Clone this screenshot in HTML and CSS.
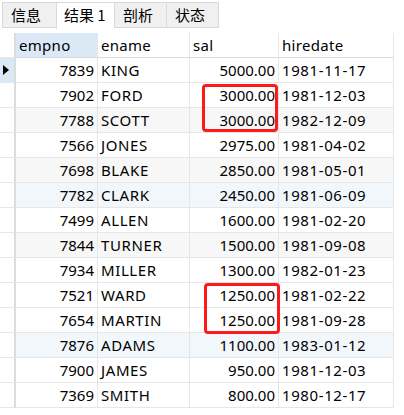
FILE: index.html
```html
<!DOCTYPE html>
<html>
<head>
<meta charset="utf-8">
<link rel="stylesheet" href="styles.css">
</head>
<body>
<div class="tabs">
  <div class="tab">信息</div>
  <div class="tab active">结果 1</div>
  <div class="tab">剖析</div>
  <div class="tab">状态</div>
</div>
<div class="grid">
  <div class="row head">
    <div class="ind"></div>
    <div class="cell sel">empno</div>
    <div class="cell">ename</div>
    <div class="cell">sal</div>
    <div class="cell">hiredate</div>
  </div>
  <div class="row cur"><div class="ind"><span class="tri"></span></div><div class="cell num">7839</div><div class="cell">KING</div><div class="cell num">5000.00</div><div class="cell">1981-11-17</div></div>
  <div class="row"><div class="ind"></div><div class="cell num">7902</div><div class="cell">FORD</div><div class="cell num">3000.00</div><div class="cell">1981-12-03</div></div>
  <div class="row alt"><div class="ind"></div><div class="cell num">7788</div><div class="cell">SCOTT</div><div class="cell num">3000.00</div><div class="cell">1982-12-09</div></div>
  <div class="row"><div class="ind"></div><div class="cell num">7566</div><div class="cell">JONES</div><div class="cell num">2975.00</div><div class="cell">1981-04-02</div></div>
  <div class="row alt"><div class="ind"></div><div class="cell num">7698</div><div class="cell">BLAKE</div><div class="cell num">2850.00</div><div class="cell">1981-05-01</div></div>
  <div class="row blue"><div class="ind"></div><div class="cell num">7782</div><div class="cell">CLARK</div><div class="cell num">2450.00</div><div class="cell">1981-06-09</div></div>
  <div class="row"><div class="ind"></div><div class="cell num">7499</div><div class="cell">ALLEN</div><div class="cell num">1600.00</div><div class="cell">1981-02-20</div></div>
  <div class="row alt"><div class="ind"></div><div class="cell num">7844</div><div class="cell">TURNER</div><div class="cell num">1500.00</div><div class="cell">1981-09-08</div></div>
  <div class="row"><div class="ind"></div><div class="cell num">7934</div><div class="cell">MILLER</div><div class="cell num">1300.00</div><div class="cell">1982-01-23</div></div>
  <div class="row"><div class="ind"></div><div class="cell num">7521</div><div class="cell">WARD</div><div class="cell num">1250.00</div><div class="cell">1981-02-22</div></div>
  <div class="row"><div class="ind"></div><div class="cell num">7654</div><div class="cell">MARTIN</div><div class="cell num">1250.00</div><div class="cell">1981-09-28</div></div>
  <div class="row blue"><div class="ind"></div><div class="cell num">7876</div><div class="cell">ADAMS</div><div class="cell num">1100.00</div><div class="cell">1983-01-12</div></div>
  <div class="row"><div class="ind"></div><div class="cell num">7900</div><div class="cell">JAMES</div><div class="cell num">950.00</div><div class="cell">1981-12-03</div></div>
  <div class="row"><div class="ind"></div><div class="cell num">7369</div><div class="cell">SMITH</div><div class="cell num">800.00</div><div class="cell">1980-12-17</div></div>
  <div class="mark mark1"></div>
  <div class="mark mark2"></div>
</div>
</body>
</html>
```
FILE: styles.css
```css
html, body {
  margin: 0;
  padding: 0;
  background: #ffffff;
}
body {
  width: 404px;
  height: 415px;
  overflow: hidden;
  font-family: "Noto Sans", "Noto Sans CJK SC", sans-serif;
  font-size: 15px;
  color: #000;
}
.tabs {
  display: flex;
  padding: 2px 0 0 2px;
  height: 26px;
}
.tab {
  box-sizing: border-box;
  height: 26px;
  width: 54px;
  padding-left: 8px;
  line-height: 24px;
  background: #f0f0f0;
  border: 1px solid #d9d9d9;
  border-right: none;
  font-family: "Noto Sans CJK SC", sans-serif;
  font-size: 15px;
}
.tab:nth-child(3) { width: 52px; }
.tab:nth-child(4) { width: 53px; border-right: 1px solid #d9d9d9; }
.tab.active {
  background: #ffffff;
  width: 58px;
  height: 27px;
  border-bottom: none;
  padding-left: 7px;
}
.grid {
  position: relative;
  margin-top: 5px;
}
.row {
  display: grid;
  grid-template-columns: 16px 82px 92px 89px 115px;
  height: 25px;
}
.ind {
  border-right: 2px solid #dcdcdc;
  border-bottom: 1px solid #e6e6e6;
  display: flex;
  align-items: center;
  justify-content: center;
}
.cur .ind { background: #dbe9f7; }
.tri {
  width: 0;
  height: 0;
  border-top: 5px solid transparent;
  border-bottom: 5px solid transparent;
  border-left: 6px solid #000;
  margin-left: -3px;
}
.cell {
  border-right: 1px solid #e6e6e6;
  border-bottom: 1px solid #e6e6e6;
  line-height: 24px;
  padding: 0 3px;
  white-space: nowrap;
  overflow: hidden;
  letter-spacing: 0.6px;
}
.head .cell {
  border-bottom: 1px solid #dadada;
  padding-left: 3px;
  letter-spacing: 0.3px;
}
.head .sel { background: #dbe9f7; }
.num { text-align: right; letter-spacing: 0; }
.alt .cell { background: #f7f7f7; }
.blue .cell { background: #f2f7fc; }
.mark {
  position: absolute;
  border: 3px solid #ff1a1a;
  border-radius: 4px;
  box-sizing: border-box;
}
.mark1 { left: 202px; top: 51px; width: 76px; height: 48px; }
.mark2 { left: 204px; top: 250px; width: 76px; height: 51px; }
```
